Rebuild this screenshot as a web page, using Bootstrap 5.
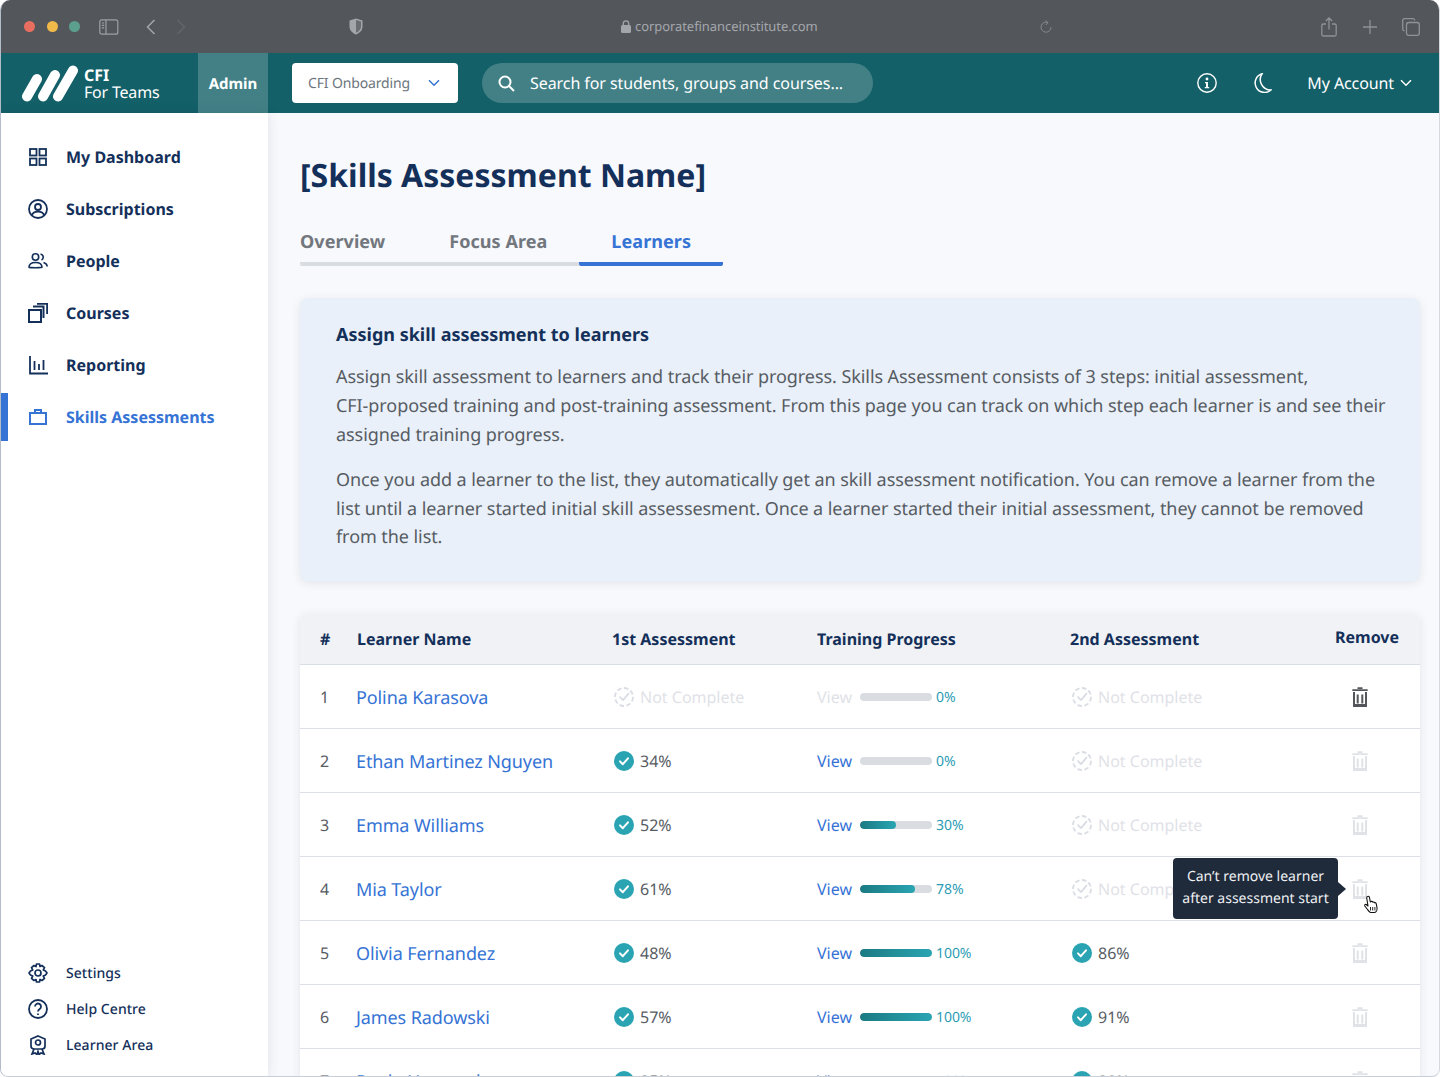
<!doctype html>
<html lang="en">
<head>
<meta charset="utf-8">
<title>Skills Assessment</title>
<link href="https://cdn.jsdelivr.net/npm/bootstrap@5.3.0/dist/css/bootstrap.min.css" rel="stylesheet">
<style>
html,body{height:1077px;overflow:hidden;background:#fff}
body{font-family:"Noto Sans",sans-serif;color:#14305a;text-rendering:geometricPrecision}
.app-window{height:1077px;border-radius:10px 10px 8px 8px;overflow:hidden;display:flex;flex-direction:column;background:#f8f9fc;border-left:1px solid #b4bcc9;border-right:1px solid #d5d8de;border-bottom:1px solid #c9ced6}
.chrome{height:53px;flex:none;background:#53565b;color:#a3a6ab;margin:0 -1px}
.dot{width:11px;height:11px;border-radius:50%;display:block}
.url-text{font-size:13px;color:#a4a7ac;letter-spacing:-.07px}
.topbar{height:60px;flex:none;background:#136068;color:#fff;margin:0 -1px}
.brand-box{width:198px;padding-left:22px}
.brand-text{font-size:16px;line-height:17px;margin:1px 0 0 6px;letter-spacing:-.2px}
.brand-text b{letter-spacing:0}
.admin-box{width:70px;background:#428086;font-weight:700;font-size:15px;padding-top:2px;letter-spacing:-.04px}
.org-select{width:166px;height:40px;margin-left:24px;background:#fff;border-radius:4px;color:#6c757d;font-size:14px;padding:0 18px 0 16px;letter-spacing:-.14px}
.search-box{width:391px;height:40px;margin-left:24px;background:#428086;border-radius:20px;padding:0 16px;font-size:16px;letter-spacing:-.07px}
.acct{font-size:16px;letter-spacing:-.1px}
.side{width:267px;flex:none;background:#fff;box-shadow:0 0 12px rgba(30,50,80,.12);z-index:1}
.side-link{height:52px;padding-left:27px;color:#14305a;font-weight:700;font-size:16px;text-decoration:none;position:relative}
.side-link.is-on{color:#3573d5}
.side-link.is-on::before{content:"";position:absolute;left:-1px;top:2px;width:8px;height:48px;background:#3573d5}
.side-link svg{margin-right:18px}
.side-low{height:36px;font-size:14px;font-weight:500;padding-left:27px;color:#14305a;text-decoration:none;letter-spacing:.05px}
.side-low svg{margin-right:18px}
.main-pane{flex:1;min-width:0;padding:39px 19px 0 32px;overflow:hidden}
.page-title{font-size:32px;font-weight:700;line-height:48px;margin:0;color:#14305a}
.tab-strip{margin-top:18px;width:max-content;flex-wrap:nowrap}
.tab-item{height:48px;line-height:48px;padding:0 32px;font-size:18px;font-weight:700;color:#72777e;border-bottom:4px solid #d9dce1;text-decoration:none;display:block;letter-spacing:.06px}
.tab-item.first{padding-left:0;border-radius:0 0 0 2px}
.tab-item.is-on{color:#3573d5;border-bottom-color:#3573d5;border-radius:2px}
.info-box{margin-top:32px;height:283px;background:#e9f0f9;border-radius:8px;padding:24px 30px 0 36px;box-shadow:0 2px 10px rgba(30,50,80,.1);font-size:18px;line-height:28.8px;color:#575c63;letter-spacing:-.07px}
.info-box h2{font-size:18px;font-weight:700;line-height:26px;color:#14305a;margin:0 0 15px;letter-spacing:0}
.info-box p{margin:0 0 16.500px}
.table-box{margin-top:32px;background:#fff;border-radius:8px 8px 0 0;box-shadow:0 2px 10px rgba(30,50,80,.1);overflow:hidden}
.learners{table-layout:fixed;width:100%;margin:0;--bs-table-bg:transparent}
.learners th{height:51px;background:#f0f2f5;font-size:16px;font-weight:700;color:#14305a;padding:2px 0 0;vertical-align:middle;border-bottom:1px solid #d9dee6}
.learners td{height:64px;padding:2px 0 0;vertical-align:middle;font-size:16px;color:#575c63;border-bottom:1px solid #dcdfe8}
.learners td.name-cell{padding-top:4px}
.name-link{font-size:18px;color:#3573d5;text-decoration:none;letter-spacing:-.1px}
.ps-num{padding-left:20px!important}
.th-name{padding-left:1px!important}
.muted-txt{color:#dfe2e7}
.view-link{color:#3573d5;text-decoration:none;width:43px;display:inline-block}
.view-link.off{color:#dfe2e7}
.bar-track{width:72px;height:8px;border-radius:4px;background:#d9dce1;--bs-progress-bar-bg:transparent}
.bar-fill{background:linear-gradient(90deg,#1b7a82,#2aa5b2);border-radius:4px}
.pct{font-size:14px;color:#2b9cb4;margin-left:4px;letter-spacing:-.05px}
.learners th.remove-h{text-align:center;padding:0 0 2px 14px}
.learners td.remove-c{text-align:center;padding:0 0 1px}
.tip-layer{position:absolute;left:1172px;top:858px;width:165px;height:61px;padding-bottom:2px;background:#1f2a3a;color:#eef0f3;border-radius:4px;font-size:14px;line-height:22px;text-align:center;display:flex;align-items:center;justify-content:center;z-index:5}
.tip-layer::after{content:"";position:absolute;right:-8px;top:24px;border-left:8px solid #1f2a3a;border-top:7px solid transparent;border-bottom:7px solid transparent}
.hand{position:absolute;left:1362px;top:895px;z-index:6}
.ico-grey{color:#53565b}
.ico-off{color:#dfe2e7}
.ck{margin:0 6px 0 2px;flex:none}
</style>
</head>
<body>
<svg width="0" height="0" class="position-absolute">
<defs>
<symbol id="done" viewBox="0 0 20 20"><circle cx="10" cy="10" r="10" fill="#2aa3b2"/><path d="M6 10.4l2.8 2.8L14 7.3" fill="none" stroke="#fff" stroke-width="2" stroke-linecap="round" stroke-linejoin="round"/></symbol>
<symbol id="todo" viewBox="0 0 20 20"><circle cx="10" cy="10" r="9" fill="none" stroke="#dadde3" stroke-width="1.8" stroke-dasharray="4.6 2.4"/><path d="M6 10.2l3 3L14.5 6.6" fill="none" stroke="#dadde3" stroke-width="1.8" stroke-linecap="round" stroke-linejoin="round"/></symbol>
<symbol id="bin" viewBox="0 0 16 20"><path d="M5.5 1.2h5M.3 3.2h15.4" stroke="currentColor" stroke-width="1.8" fill="none"/><path d="M2 5v14h12V5M5.7 7.5v9M10.3 7.5v9" stroke="currentColor" stroke-width="2" fill="none"/><path d="M2 18h12" stroke="currentColor" stroke-width="2"/></symbol>
</defs>
</svg>
<div class="app-window position-relative">
  <div class="chrome position-relative d-flex align-items-center">
    <div class="d-flex align-items-center gap-2 flex-none" style="margin-left:24px"></div>
    <span class="d-flex align-items-center" style="gap:11.5px"><span class="dot" style="background:#e96e5f"></span><span class="dot" style="background:#f1b84a"></span><span class="dot" style="background:#5c9f8f"></span></span>
    <svg style="margin-left:19px" width="20" height="16" viewBox="0 0 20 16" fill="none" stroke="#9da0a5" stroke-width="1.2"><rect x=".8" y=".8" width="18" height="14.4" rx="2"/><path d="M7 1v14M2.8 4h2.4M2.8 6.4h2.4M2.8 8.8h2.4"/></svg>
    <svg style="margin-left:27px" width="10" height="16" viewBox="0 0 10 16" fill="none" stroke="#a3a6ab" stroke-width="1.5"><path d="M8.5 1L1.5 8l7 7"/></svg>
    <svg style="margin-left:20px" width="10" height="16" viewBox="0 0 10 16" fill="none" stroke="#63666b" stroke-width="1.5"><path d="M1.5 1l7 7-7 7"/></svg>
    <svg style="margin-left:163px" width="14" height="17" viewBox="0 0 14 17"><path d="M7 .5L.5 2.5v6c0 4 3 6.500 6.500 8 3.500-1.500 6.500-4 6.500-8v-6z" fill="#a3a6ab"/><path d="M7 2l5 1.500v5c0 3-2.200 5-5 6.300z" fill="#6a6d72"/></svg>
    <svg style="margin-left:258px" width="10" height="13" viewBox="0 0 10 13"><rect y="5" width="10" height="8" rx="1.500" fill="#a3a6ab"/><path d="M2.300 5.500V3.500a2.700 2.700 0 015.400 0v2" fill="none" stroke="#a3a6ab" stroke-width="1.300"/></svg>
    <span class="url-text ms-1">corporatefinanceinstitute.com</span>
    <svg style="position:absolute;left:1040px;top:20px" width="12" height="14" viewBox="0 0 12 14" fill="none" stroke="#85888d" stroke-width="1"><path d="M8 2.600A5 5 0 1 0 11 7"/><path d="M5.500.5L8 2.600 5.800 5"/></svg>
    <div class="d-flex align-items-center ms-auto" style="margin-right:20px">
    <svg width="16" height="20" viewBox="0 0 16 20" fill="none" stroke="#8f9297" stroke-width="1.300"><path d="M5 7H2.300A1.500 1.500 0 0 0 .8 8.500v9A1.500 1.500 0 0 0 2.300 19h11.400a1.500 1.500 0 0 0 1.500-1.500v-9A1.500 1.500 0 0 0 13.700 7H11M8 12.500V1M4.800 4L8 1l3.200 3"/></svg>
    <svg style="margin-left:26px" width="14" height="14" viewBox="0 0 14 14" stroke="#8f9297" stroke-width="1.300"><path d="M7 0v14M0 7h14"/></svg>
    <svg style="margin-left:25px" width="18" height="18" viewBox="0 0 18 18" fill="none" stroke="#8f9297" stroke-width="1.300"><rect x="4.500" y="4.500" width="12.800" height="12.800" rx="2.200"/><path d="M2.500 12.800A1.900 1.900 0 0 1 .7 11V2.600A1.900 1.900 0 0 1 2.600.7H11a1.900 1.900 0 0 1 1.800 1.800"/></svg>
    </div>
  </div>

  <nav class="topbar navbar p-0 flex-nowrap justify-content-start align-items-stretch">
    <a class="brand-box d-flex align-items-center text-white text-decoration-none" href="#">
      <svg width="56" height="37" viewBox="0 0 56 37" fill="none" stroke="#fff" stroke-width="10" stroke-linecap="round"><path d="M5 31.500L15 14M21 31.500L33 10M36 31.500L51 5.500"/></svg>
      <span class="brand-text"><b class="d-block fw-bold">CFI</b>For Teams</span>
    </a>
    <div class="admin-box d-flex align-items-center justify-content-center">Admin</div>
    <div class="org-select d-flex align-items-center justify-content-between align-self-center"><span>CFI Onboarding</span>
      <svg width="12" height="8" viewBox="0 0 12 8" fill="none" stroke="#3573d5" stroke-width="1.500"><path d="M1 1.300l5 5 5-5"/></svg></div>
    <div class="search-box d-flex align-items-center align-self-center">
      <svg width="17" height="17" viewBox="0 0 17 17" fill="none" stroke="#fff" stroke-width="2"><circle cx="7" cy="7" r="5.500"/><path d="M11 11l5 5"/></svg>
      <span style="margin-left:15px">Search for students, groups and courses...</span></div>
    <div class="d-flex align-items-center ms-auto">
      <svg width="20" height="20" viewBox="0 0 20 20" fill="none"><circle cx="10" cy="10" r="9.200" stroke="#fff" stroke-width="1.400"/><circle cx="10" cy="6" r="1.400" fill="#fff"/><path d="M8 9h3v5h1.200v1.300H7.800V14H9v-3.700H8z" fill="#fff"/></svg>
      <svg style="margin-left:37px" width="18" height="20" viewBox="0 0 18 20" fill="none" stroke="#fff" stroke-width="1.500"><path d="M8 .8A9.500 9.500 0 1 0 17 17 10.500 10.500 0 0 1 8 .8z"/></svg>
      <span class="acct" style="margin-left:35px">My Account</span>
      <svg style="margin:0 28px 0 6px" width="12" height="8" viewBox="0 0 12 8" fill="none" stroke="#fff" stroke-width="1.500"><path d="M1 1.300l5 5 5-5"/></svg>
    </div>
  </nav>

  <div class="d-flex flex-grow-1" style="min-height:0">
    <aside class="side d-flex flex-column justify-content-between" style="padding:18px 0 13px">
      <nav class="nav flex-column">
        <a class="side-link d-flex align-items-center" href="#"><svg width="20" height="20" viewBox="0 0 20 20" fill="none" stroke="#14305a" stroke-width="1.800"><rect x="2" y="2" width="6.500" height="6.500"/><rect x="11.500" y="2" width="6.500" height="6.500"/><rect x="2" y="11.500" width="6.500" height="6.500"/><rect x="11.500" y="11.500" width="6.500" height="6.500"/></svg>My Dashboard</a>
        <a class="side-link d-flex align-items-center" href="#"><svg width="20" height="20" viewBox="0 0 20 20" fill="none" stroke="#14305a" stroke-width="1.800"><circle cx="10" cy="10" r="9"/><circle cx="10" cy="8" r="3"/><path d="M3.800 16.500c1-3 3.500-3.800 6.200-3.800s5.200.8 6.200 3.800"/></svg>Subscriptions</a>
        <a class="side-link d-flex align-items-center" href="#"><svg width="20" height="20" viewBox="0 0 20 20" fill="none" stroke="#14305a" stroke-width="1.600"><circle cx="7.500" cy="6" r="3.200"/><path d="M1 16.500c0-3.500 3-5 6.500-5s6.500 1.500 6.500 5c0 .3-13 .3-13 0zM12.500 3a3.200 3.200 0 0 1 1 6M15.500 11.500c2 .6 3.500 2 3.800 4"/></svg>People</a>
        <a class="side-link d-flex align-items-center" href="#"><svg width="20" height="20" viewBox="0 0 20 20" fill="none" stroke="#14305a" stroke-width="2"><rect x="1" y="7" width="12" height="12"/><path d="M5 3.500h10.500V15M9 .8h10.200V11"/></svg>Courses</a>
        <a class="side-link d-flex align-items-center" href="#"><svg width="20" height="20" viewBox="0 0 20 20" fill="none" stroke="#14305a" stroke-width="1.800"><path d="M2 1v17.500h18M6.500 6v9M11 9v6M15.500 5v10"/></svg>Reporting</a>
        <a class="side-link is-on d-flex align-items-center" href="#"><svg width="20" height="20" viewBox="0 0 20 20" fill="none" stroke="#3573d5" stroke-width="2"><rect x="2" y="6" width="16" height="11"/><path d="M7 6V3h6v3"/></svg>Skills Assessments</a>
      </nav>
      <nav class="nav flex-column">
        <a class="side-low d-flex align-items-center" href="#"><svg width="20" height="20" viewBox="0 0 20 20" fill="none" stroke="#14305a" stroke-width="1.700"><circle cx="10" cy="10" r="3"/><path d="M8.500 1h3l.5 2.500 2-1 2.500 2.200-1.200 2.200L17.500 8 19 10l-1.500 2-2.200 1.100 1.200 2.200-2.500 2.200-2-1-.5 2.500h-3L8 16.500l-2 1-2.500-2.200 1.200-2.200L2.500 12 1 10l1.500-2 2.200-1.100-1.200-2.200L6 2.500l2 1z" stroke-linejoin="round"/></svg>Settings</a>
        <a class="side-low d-flex align-items-center" href="#"><svg width="20" height="20" viewBox="0 0 20 20" fill="none" stroke="#14305a" stroke-width="1.800"><circle cx="10" cy="10" r="9"/><path d="M7 7.500a3 3 0 1 1 4.700 2.500c-1 .7-1.700 1.200-1.700 2.500"/><path d="M10 14.500v1.600"/></svg>Help Centre</a>
        <a class="side-low d-flex align-items-center" href="#"><svg width="20" height="20" viewBox="0 0 20 20" fill="none" stroke="#14305a" stroke-width="1.700"><path d="M10 1l7 3v7c0 2-1 3-3 3H6c-2 0-3-1-3-3V4z"/><circle cx="10" cy="7.500" r="2.500"/><path d="M6 14l-2 5 3-1 2 1.500 1-3 1 3 2-1.500 3 1-2-5"/></svg>Learner Area</a>
      </nav>
    </aside>

    <main class="main-pane">
      <h1 class="page-title">[Skills Assessment Name]</h1>
      <div class="nav tab-strip">
        <a class="tab-item first" href="#">Overview</a><a class="tab-item" href="#">Focus Area</a><a class="tab-item is-on" href="#">Learners</a>
      </div>
      <section class="info-box">
        <h2>Assign skill assessment to learners</h2>
        <p>Assign skill assessment to learners and track their progress. Skills Assessment consists of 3 steps: initial assessment, <span class="text-nowrap">CFI-proposed</span> training and post-training assessment. From this page you can track on which step each learner is and see their assigned training progress.</p>
        <p>Once you add a learner to the list, they automatically get an skill assessment notification. You can remove a learner from the list until a learner started initial skill assessesment. Once a learner started their initial assessment, they cannot be removed from the list.</p>
      </section>
      <div class="table-box">
        <table class="table learners">
          <colgroup><col style="width:56px"><col style="width:256px"><col style="width:205px"><col style="width:253px"><col style="width:230px"><col></colgroup>
          <thead><tr><th class="ps-num">#</th><th class="th-name">Learner Name</th><th>1st Assessment</th><th>Training Progress</th><th>2nd Assessment</th><th class="remove-h">Remove</th></tr></thead>
          <tbody>
            <tr><td class="ps-num">1</td><td class="name-cell"><a class="name-link" href="#">Polina Karasova</a></td>
              <td><div class="d-flex align-items-center"><svg class="ck" width="20" height="20"><use href="#todo"/></svg><span class="muted-txt">Not Complete</span></div></td>
              <td><div class="d-flex align-items-center"><a class="view-link off" href="#">View</a><div class="progress bar-track"><div class="progress-bar bar-fill" style="width:0%"></div></div><span class="pct">0%</span></div></td>
              <td><div class="d-flex align-items-center"><svg class="ck" width="20" height="20"><use href="#todo"/></svg><span class="muted-txt">Not Complete</span></div></td>
              <td class="remove-c"><svg class="ico-grey align-middle" width="16" height="20"><use href="#bin"/></svg></td></tr>
            <tr><td class="ps-num">2</td><td class="name-cell"><a class="name-link" href="#">Ethan Martinez Nguyen</a></td>
              <td><div class="d-flex align-items-center"><svg class="ck" width="20" height="20"><use href="#done"/></svg><span>34%</span></div></td>
              <td><div class="d-flex align-items-center"><a class="view-link" href="#">View</a><div class="progress bar-track"><div class="progress-bar bar-fill" style="width:0%"></div></div><span class="pct">0%</span></div></td>
              <td><div class="d-flex align-items-center"><svg class="ck" width="20" height="20"><use href="#todo"/></svg><span class="muted-txt">Not Complete</span></div></td>
              <td class="remove-c"><svg class="ico-off align-middle" width="16" height="20"><use href="#bin"/></svg></td></tr>
            <tr><td class="ps-num">3</td><td class="name-cell"><a class="name-link" href="#">Emma Williams</a></td>
              <td><div class="d-flex align-items-center"><svg class="ck" width="20" height="20"><use href="#done"/></svg><span>52%</span></div></td>
              <td><div class="d-flex align-items-center"><a class="view-link" href="#">View</a><div class="progress bar-track"><div class="progress-bar bar-fill" style="width:50%"></div></div><span class="pct">30%</span></div></td>
              <td><div class="d-flex align-items-center"><svg class="ck" width="20" height="20"><use href="#todo"/></svg><span class="muted-txt">Not Complete</span></div></td>
              <td class="remove-c"><svg class="ico-off align-middle" width="16" height="20"><use href="#bin"/></svg></td></tr>
            <tr><td class="ps-num">4</td><td class="name-cell"><a class="name-link" href="#">Mia Taylor</a></td>
              <td><div class="d-flex align-items-center"><svg class="ck" width="20" height="20"><use href="#done"/></svg><span>61%</span></div></td>
              <td><div class="d-flex align-items-center"><a class="view-link" href="#">View</a><div class="progress bar-track"><div class="progress-bar bar-fill" style="width:76%"></div></div><span class="pct">78%</span></div></td>
              <td><div class="d-flex align-items-center"><svg class="ck" width="20" height="20"><use href="#todo"/></svg><span class="muted-txt">Not Complete</span></div></td>
              <td class="remove-c"><svg class="ico-off align-middle" width="16" height="20"><use href="#bin"/></svg></td></tr>
            <tr><td class="ps-num">5</td><td class="name-cell"><a class="name-link" href="#">Olivia Fernandez</a></td>
              <td><div class="d-flex align-items-center"><svg class="ck" width="20" height="20"><use href="#done"/></svg><span>48%</span></div></td>
              <td><div class="d-flex align-items-center"><a class="view-link" href="#">View</a><div class="progress bar-track"><div class="progress-bar bar-fill" style="width:100%"></div></div><span class="pct">100%</span></div></td>
              <td><div class="d-flex align-items-center"><svg class="ck" width="20" height="20"><use href="#done"/></svg><span>86%</span></div></td>
              <td class="remove-c"><svg class="ico-off align-middle" width="16" height="20"><use href="#bin"/></svg></td></tr>
            <tr><td class="ps-num">6</td><td class="name-cell"><a class="name-link" href="#">James Radowski</a></td>
              <td><div class="d-flex align-items-center"><svg class="ck" width="20" height="20"><use href="#done"/></svg><span>57%</span></div></td>
              <td><div class="d-flex align-items-center"><a class="view-link" href="#">View</a><div class="progress bar-track"><div class="progress-bar bar-fill" style="width:100%"></div></div><span class="pct">100%</span></div></td>
              <td><div class="d-flex align-items-center"><svg class="ck" width="20" height="20"><use href="#done"/></svg><span>91%</span></div></td>
              <td class="remove-c"><svg class="ico-off align-middle" width="16" height="20"><use href="#bin"/></svg></td></tr>
            <tr><td class="ps-num">7</td><td class="name-cell"><a class="name-link" href="#">Paula Hernandez</a></td>
              <td><div class="d-flex align-items-center"><svg class="ck" width="20" height="20"><use href="#done"/></svg><span>85%</span></div></td>
              <td><div class="d-flex align-items-center"><a class="view-link" href="#">View</a><div class="progress bar-track"><div class="progress-bar bar-fill" style="width:100%"></div></div><span class="pct">100%</span></div></td>
              <td><div class="d-flex align-items-center"><svg class="ck" width="20" height="20"><use href="#done"/></svg><span>89%</span></div></td>
              <td class="remove-c"><svg class="ico-off align-middle" width="16" height="20"><use href="#bin"/></svg></td></tr>
          </tbody>
        </table>
      </div>
    </main>
  </div>
  <div class="tip-layer" role="tooltip"><span>Can’t remove learner<br>after assessment start</span></div>
  <svg class="hand" width="16" height="19" viewBox="0 0 16 19"><path d="M4.500 1.500c1-.6 1.800 0 2 1l.8 4.500 1-.6c.8-.2 1.300.2 1.500.8.700-.5 1.500-.2 1.700.6.800-.4 1.500 0 1.700.8l.8 4c.3 2-.7 4.500-2.500 4.900H7.500c-1.300-.4-2-1.500-3-3L1.800 11c-.5-1 .5-2 1.500-1.500l1.700 1.500-1.300-8c-.1-.7.100-1.200.8-1.500z" fill="#fff" stroke="#111" stroke-width="1.100" stroke-linejoin="round"/><path d="M7.500 12v3.500M9.700 12v3.500M11.900 12v3.500" stroke="#111" stroke-width=".9"/></svg>
</div>
<script src="https://cdn.jsdelivr.net/npm/bootstrap@5.3.0/dist/js/bootstrap.bundle.min.js"></script>
</body>
</html>
